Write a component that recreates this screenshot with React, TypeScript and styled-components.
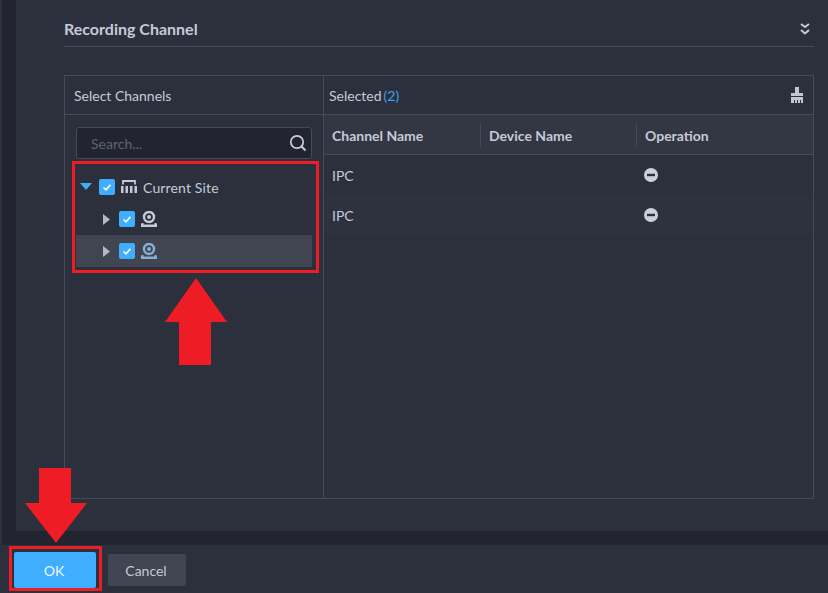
import React from 'react'
import styled, { createGlobalStyle } from 'styled-components'

const GlobalStyle = createGlobalStyle`
    html, body {
        margin: 0;
        padding: 0;
        background: #2c303c;
    }
    * {
        box-sizing: border-box;
    }
`

const Page = styled.div`
    position: relative;
    display: flex;
    flex-direction: column;
    width: 828px;
    height: 593px;
    overflow: hidden;
    padding-left: 2px;
    background: #2c303c;
    color: #c5cad8;
    font-family: Lato, 'Liberation Sans', sans-serif;
    font-size: 14px;
`

const Shell = styled.div`
    flex: 1;
    min-height: 0;
    padding: 0 0 14px 14px;
    background: #22252f;
`

const Content = styled.div`
    height: 100%;
    padding: 0 14px 0 48px;
    background: #2c303c;
`

const SectionHeader = styled.div`
    display: flex;
    align-items: center;
    justify-content: space-between;
    height: 47px;
    padding: 12px 4px 0 0;
    border-bottom: 1px solid #464a59;
`

const SectionTitle = styled.div`
    padding-bottom: 2px;
    font-size: 16px;
    font-weight: 700;
    color: #c5cad8;
`

const Transfer = styled.div`
    display: grid;
    grid-template-columns: 259px 1fr;
    height: 424px;
    margin-top: 28px;
    border: 1px solid #464a59;
`

const LeftPane = styled.div`
    border-right: 1px solid #464a59;
`

const PaneHeader = styled.div<{ $inset: number }>`
    display: flex;
    align-items: center;
    justify-content: space-between;
    height: 39px;
    padding: 0 10px 0 ${(p) => p.$inset}px;
    border-bottom: 1px solid #464a59;
    font-size: 14px;
`

const SelectedLabel = styled.div`
    display: flex;
    gap: 2px;
`

const Count = styled.span`
    color: #3f9fee;
`

const PaneBody = styled.div`
    padding: 12px 10px 0 11px;
`

const SearchBox = styled.div`
    display: flex;
    align-items: center;
    justify-content: space-between;
    width: 236px;
    height: 32px;
    padding: 0 4px 0 14px;
    background: #22252f;
    border: 1px solid #464a59;
    border-radius: 3px;
    color: #5f6473;
    font-size: 14px;
`

const Tree = styled.div`
    margin-top: 12px;
    width: 236px;
`

const TreeRow = styled.div<{ $depth: number; $active?: boolean }>`
    display: flex;
    align-items: center;
    height: 32px;
    padding-left: ${(p) => (p.$depth ? 27 : 4)}px;
    background: ${(p) => (p.$active ? '#404551' : 'transparent')};
`

const CaretSlot = styled.div<{ $wide?: boolean }>`
    display: flex;
    align-items: center;
    width: ${(p) => (p.$wide ? 19 : 16)}px;
    height: 16px;
`

const Check = styled.div`
    display: flex;
    align-items: center;
    justify-content: center;
    width: 16px;
    height: 16px;
    margin-right: 6px;
    background: #40aeff;
    border-radius: 2px;
`

const SiteLabel = styled.span`
    margin-left: 6px;
    font-size: 14px;
    letter-spacing: 0.15px;
`

const TableHead = styled.div`
    display: grid;
    grid-template-columns: 156px 156px 1fr;
    align-items: center;
    height: 40px;
    background: #333743;
    border-bottom: 1px solid #464a59;
`

const HeadCell = styled.div<{ $divider?: boolean }>`
    height: 24px;
    line-height: 26px;
    padding-left: 8px;
    font-size: 14px;
    font-weight: 700;
    border-left: ${(p) => (p.$divider ? '1px solid #464a59' : 'none')};
`

const TableRow = styled.div<{ $alt?: boolean }>`
    display: grid;
    grid-template-columns: 156px 156px 1fr;
    align-items: center;
    height: 40px;
    background: ${(p) => (p.$alt ? '#2d323e' : 'transparent')};
`

const Cell = styled.div`
    display: flex;
    align-items: center;
    padding-left: 8px;
    font-size: 14px;
`

const Footer = styled.div`
    display: flex;
    align-items: center;
    gap: 12px;
    height: 48px;
    padding: 2px 0 0 12px;
    background: #2c303c;
`

const Button = styled.button<{ $primary?: boolean }>`
    height: ${(p) => (p.$primary ? 36 : 32)}px;
    width: ${(p) => (p.$primary ? 82 : 78)}px;
    padding: 0 2px 0 0;
    border: none;
    border-radius: 2px;
    background: ${(p) => (p.$primary ? '#40aeff' : '#404551')};
    color: ${(p) => (p.$primary ? '#eef6ff' : '#c5cad8')};
    font-family: inherit;
    font-size: 14px;
`

const Highlight = styled.div<{ $x: number; $y: number; $w: number; $h: number }>`
    position: absolute;
    left: ${(p) => p.$x}px;
    top: ${(p) => p.$y}px;
    width: ${(p) => p.$w}px;
    height: ${(p) => p.$h}px;
    border: 3px solid #ee1c25;
    pointer-events: none;
`

const Arrow = styled.svg<{ $x: number; $y: number }>`
    position: absolute;
    left: ${(p) => p.$x}px;
    top: ${(p) => p.$y}px;
`

const Caret = ({ open }: { open?: boolean }) =>
    open ? (
        <svg width="12" height="8" viewBox="0 0 12 8">
            <path d="M0 0h12L6 7z" fill="#3fb0f5" />
        </svg>
    ) : (
        <svg width="7" height="11" viewBox="0 0 7 11">
            <path d="M0 0l7 5.5L0 11z" fill="#b4b9c8" />
        </svg>
    )

const Tick = () => (
    <svg width="12" height="12" viewBox="0 0 12 12">
        <path d="M2.5 6.5l2.5 2.3 4.5-5" fill="none" stroke="#fff" strokeWidth="1.6" />
    </svg>
)

const SiteIcon = () => (
    <svg width="16" height="14" viewBox="0 0 16 14">
        <path d="M2 4.500V1h12v3.500" fill="none" stroke="#c5cad8" strokeWidth="1.800" />
        <path d="M0 6h2.500v7H0zM4.500 6H7v7H4.500zM9 6h2.500v7H9zM13.500 6H16v7h-2.500z" fill="#c5cad8" />
    </svg>
)

const CameraIcon = ({ color }: { color: string }) => (
    <svg width="16" height="16" viewBox="0 0 16 16">
        <circle cx="8" cy="6" r="5" fill="none" stroke={color} strokeWidth="2.400" />
        <circle cx="8" cy="6" r="2" fill={color} />
        <path d="M0 16v-2.500c0-1 .5-1.500 1.500-1.500h1v1.500h11V12h1c1 0 1.500.5 1.500 1.500V16z" fill={color} />
    </svg>
)

const SearchIcon = () => (
    <svg width="18" height="18" viewBox="0 0 18 18">
        <circle cx="8" cy="8" r="6.200" fill="none" stroke="#c9ced9" strokeWidth="1.700" />
        <path d="M12.500 12.500l4 4" stroke="#c9ced9" strokeWidth="2" />
    </svg>
)

const DoubleChevron = () => (
    <svg width="10" height="12" viewBox="0 0 10 12">
        <path
            d="M1 1l4 3 4-3M1 7l4 3.500L9 7"
            fill="none"
            stroke="#c5cad8"
            strokeWidth="2"
        />
    </svg>
)

const BroomIcon = () => (
    <svg width="12" height="16" viewBox="0 0 12 16">
        <path
            d="M4 0h4v6h4v3H0V6h4zM0 10h12v6h-2v-3H9v3H7v-3H6v3H4v-3H3v3H0z"
            fill="#c1c6d4"
        />
    </svg>
)

const RemoveIcon = () => (
    <svg width="14" height="14" viewBox="0 0 14 14">
        <circle cx="7" cy="7" r="7" fill="#ccd0dc" />
        <rect x="3" y="5.800" width="8" height="2.400" fill="#2c303c" />
    </svg>
)

const channels = [{ name: 'IPC' }, { name: 'IPC', alt: true }]

const App = () => {
    return (
        <Page>
            <GlobalStyle />
            <Shell>
                <Content>
                    <SectionHeader>
                        <SectionTitle>Recording Channel</SectionTitle>
                        <DoubleChevron />
                    </SectionHeader>
                    <Transfer>
                        <LeftPane>
                            <PaneHeader $inset={9}>
                                <span>Select Channels</span>
                            </PaneHeader>
                            <PaneBody>
                                <SearchBox>
                                    <span>Search...</span>
                                    <SearchIcon />
                                </SearchBox>
                                <Tree>
                                    <TreeRow $depth={0}>
                                        <CaretSlot $wide>
                                            <Caret open />
                                        </CaretSlot>
                                        <Check>
                                            <Tick />
                                        </Check>
                                        <SiteIcon />
                                        <SiteLabel>Current Site</SiteLabel>
                                    </TreeRow>
                                    <TreeRow $depth={1}>
                                        <CaretSlot>
                                            <Caret />
                                        </CaretSlot>
                                        <Check>
                                            <Tick />
                                        </Check>
                                        <CameraIcon color="#c5cad8" />
                                    </TreeRow>
                                    <TreeRow $depth={1} $active>
                                        <CaretSlot>
                                            <Caret />
                                        </CaretSlot>
                                        <Check>
                                            <Tick />
                                        </Check>
                                        <CameraIcon color="#86aed6" />
                                    </TreeRow>
                                </Tree>
                            </PaneBody>
                        </LeftPane>
                        <div>
                            <PaneHeader $inset={5}>
                                <SelectedLabel>
                                    <span>Selected</span>
                                    <Count>(2)</Count>
                                </SelectedLabel>
                                <BroomIcon />
                            </PaneHeader>
                            <TableHead>
                                <HeadCell>Channel Name</HeadCell>
                                <HeadCell $divider>Device Name</HeadCell>
                                <HeadCell $divider>Operation</HeadCell>
                            </TableHead>
                            {channels.map((channel, i) => (
                                <TableRow key={i} $alt={channel.alt}>
                                    <Cell>{channel.name}</Cell>
                                    <Cell />
                                    <Cell>
                                        <RemoveIcon />
                                    </Cell>
                                </TableRow>
                            ))}
                        </div>
                    </Transfer>
                </Content>
            </Shell>
            <Footer>
                <Button $primary>OK</Button>
                <Button>Cancel</Button>
            </Footer>

            <Highlight $x={72} $y={161} $w={247} $h={112} />
            <Highlight $x={9} $y={546} $w={93} $h={45} />
            <Arrow $x={165} $y={278} width="62" height="87" viewBox="0 0 62 87">
                <path d="M31 0l31 44H46v43H14V44H0z" fill="#ee1c25" />
            </Arrow>
            <Arrow $x={25} $y={468} width="62" height="75" viewBox="0 0 62 75">
                <path d="M14 0h32v35h16L31 75 0 35h14z" fill="#ee1c25" />
            </Arrow>
        </Page>
    )
}

export default App
